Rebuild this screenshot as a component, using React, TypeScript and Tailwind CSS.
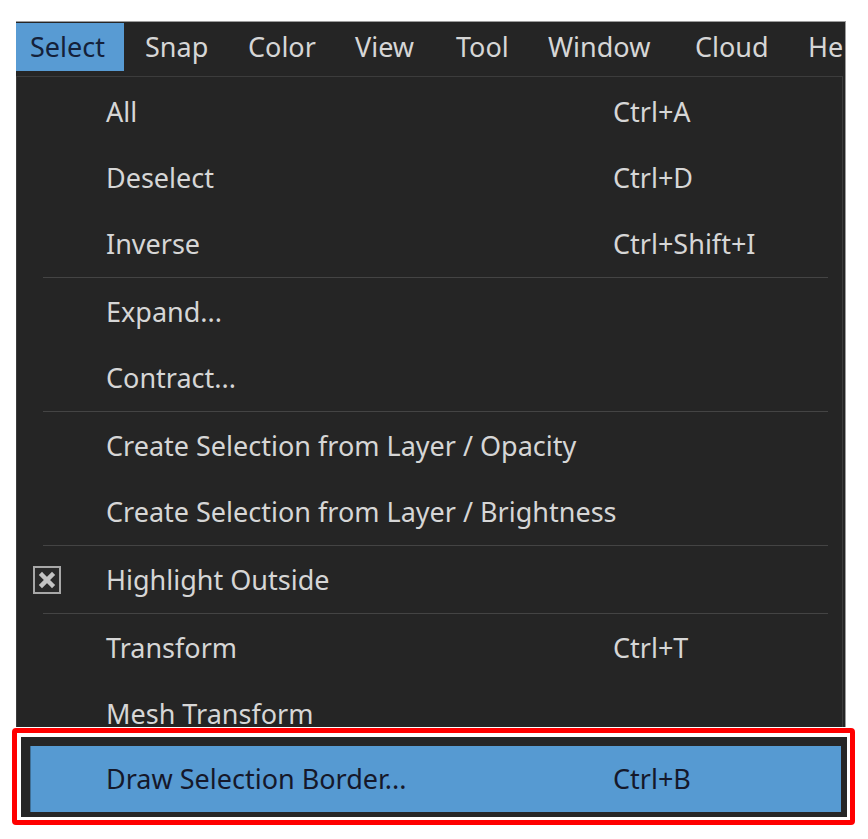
const menus = [
  { label: "Select", w: "w-[108px]", pl: "pl-[14px]", active: true },
  { label: "Snap", w: "w-[103px]", pl: "pl-[21px]" },
  { label: "Color", w: "w-[107px]", pl: "pl-[21px]" },
  { label: "View", w: "w-[101px]", pl: "pl-[21px]" },
  { label: "Tool", w: "w-[92px]", pl: "pl-[21px]" },
  { label: "Window", w: "w-[147px]", pl: "pl-[21px]" },
  { label: "Cloud", w: "w-[113px]", pl: "pl-[21px]" },
  { label: "Help", w: "w-[120px]", pl: "pl-[21px]" },
];

type Item = { label: string; shortcut?: string; checked?: boolean } | "sep";

const items: Item[] = [
  { label: "All", shortcut: "Ctrl+A" },
  { label: "Deselect", shortcut: "Ctrl+D" },
  { label: "Inverse", shortcut: "Ctrl+Shift+I" },
  "sep",
  { label: "Expand..." },
  { label: "Contract..." },
  "sep",
  { label: "Create Selection from Layer / Opacity" },
  { label: "Create Selection from Layer / Brightness" },
  "sep",
  { label: "Highlight Outside", checked: true },
  "sep",
  { label: "Transform", shortcut: "Ctrl+T" },
  { label: "Mesh Transform" },
];

function CheckBox() {
  return (
    <svg width="28" height="28" viewBox="0 0 28 28">
      <rect x="1" y="1" width="26" height="26" fill="#2a2a2a" stroke="#a8a8a8" strokeWidth="2" />
      <path d="M9 9 L19 19 M19 9 L9 19" stroke="#c4c4c4" strokeWidth="4.5" strokeLinecap="square" />
    </svg>
  );
}

function Row({ label, shortcut, checked }: { label: string; shortcut?: string; checked?: boolean }) {
  return (
    <div className="flex items-center h-[66px] shrink-0 pt-[2px]">
      <div className="w-[89px] shrink-0 flex items-center pl-[16px]">{checked && <CheckBox />}</div>
      <div className="w-[507px] shrink-0 whitespace-nowrap">{label}</div>
      <div className="whitespace-nowrap">{shortcut}</div>
    </div>
  );
}

export default function App() {
  return (
    <div className="min-h-screen bg-white pt-[21px] pl-[16px] font-['Segoe_UI','Noto_Sans',sans-serif] text-[27px] text-[#d6d6d6]">
      {/* Window: menu bar + open dropdown */}
      <div className="w-[830px] h-[706px] bg-[#252525] border-t border-r border-[#9c9c9c] flex flex-col overflow-hidden">
        <div className="flex h-[49px] shrink-0 overflow-hidden pt-[1px]">
          {menus.map((m) => (
            <div
              key={m.label}
              className={`${m.w} ${m.pl} shrink-0 flex items-center whitespace-nowrap overflow-hidden ${m.active ? "bg-[#589bd3] text-[#14213a]" : ""}`}
            >
              {m.label}
            </div>
          ))}
        </div>
        <div className="h-[5px] shrink-0" />
        <div className="w-[827px] flex-1 border-t border-l border-r border-[#3c3c3c] pt-[1px] flex flex-col overflow-hidden">
          {items.map((it, i) =>
            it === "sep" ? (
              <div key={i} className="h-[2px] shrink-0 flex items-end pl-[26px] pr-[14px]">
                <div className="h-px w-full bg-[#444444]" />
              </div>
            ) : (
              <Row key={i} {...it} />
            )
          )}
        </div>
      </div>

      {/* Highlighted item, framed */}
      <div className="mt-px -ml-[4px] w-[843px] h-[97px] border-[5px] border-[#ff0000] rounded-[4px] bg-white p-[4px] pr-[3px] pb-[3px]">
        <div className="h-full bg-[#262626] pl-[9px] pt-[9px] pr-[6px] pb-[5px]">
          <div className="h-full bg-[#569ad2] border-l border-[#3f6f96] text-[#15182a] flex items-center">
            <div className="w-[75px] shrink-0" />
            <div className="w-[507px] shrink-0 whitespace-nowrap">Draw Selection Border...</div>
            <div className="whitespace-nowrap">Ctrl+B</div>
          </div>
        </div>
      </div>
    </div>
  );
}
